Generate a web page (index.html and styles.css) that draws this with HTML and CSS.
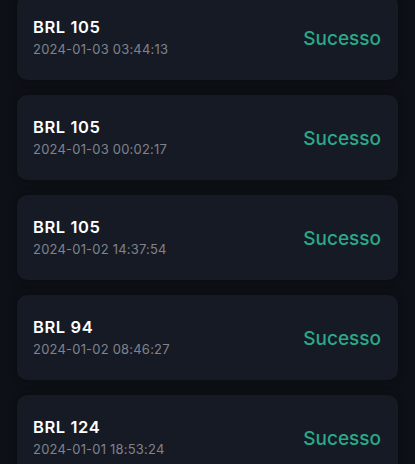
FILE: index.html
```html
<!DOCTYPE html>
<html lang="pt">
<head>
    <meta charset="UTF-8">
    <meta name="viewport" content="width=device-width, initial-scale=1.0">
    <title>Histórico</title>
    <link rel="stylesheet" href="styles.css">
</head>
<body>
    <div class="list">
        <div class="record">
            <div class="info">
                <div class="amount">BRL 105</div>
                <div class="time">2024-01-03 03:44:13</div>
            </div>
            <div class="status">Sucesso</div>
        </div>
        <div class="record">
            <div class="info">
                <div class="amount">BRL 105</div>
                <div class="time">2024-01-03 00:02:17</div>
            </div>
            <div class="status">Sucesso</div>
        </div>
        <div class="record">
            <div class="info">
                <div class="amount">BRL 105</div>
                <div class="time">2024-01-02 14:37:54</div>
            </div>
            <div class="status">Sucesso</div>
        </div>
        <div class="record">
            <div class="info">
                <div class="amount">BRL 94</div>
                <div class="time">2024-01-02 08:46:27</div>
            </div>
            <div class="status">Sucesso</div>
        </div>
        <div class="record">
            <div class="info">
                <div class="amount">BRL 124</div>
                <div class="time">2024-01-01 18:53:24</div>
            </div>
            <div class="status">Sucesso</div>
        </div>
    </div>
</body>
</html>
```

FILE: styles.css
```css
body {
    margin: 0;
    background-color: #0d1016;
    font-family: Inter, "Open Sans", sans-serif;
    overflow: hidden;
}

.list {
    display: flex;
    flex-direction: column;
    gap: 15px;
    margin: -5px 17px 0 17px;
}

.record {
    height: 85px;
    box-sizing: border-box;
    padding: 0 17px 0 16px;
    display: flex;
    align-items: center;
    justify-content: space-between;
    background-color: #161a24;
    border-radius: 10px;
    box-shadow: 0 0 8px rgba(0, 0, 0, 0.35);
}

.amount {
    color: #ffffff;
    font-size: 16.5px;
    font-weight: 600;
    line-height: 20px;
    letter-spacing: 0.6px;
}

.time {
    margin-top: 3px;
    color: #7f838d;
    font-size: 13px;
    line-height: 18px;
    letter-spacing: 0.2px;
}

.status {
    color: #2aa88a;
    font-size: 19px;
    font-weight: 500;
    margin-top: 2px;
}
```
